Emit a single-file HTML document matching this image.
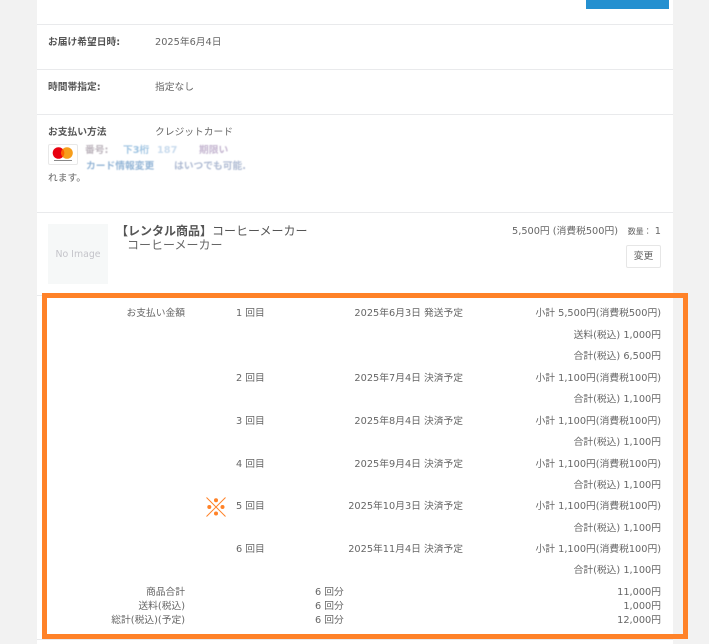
<!DOCTYPE html>
<html lang="ja">
<head>
<meta charset="utf-8">
<style>
html,body{margin:0;padding:0}
body{width:709px;height:644px;background:#f2f2f2;overflow:hidden;position:relative;font-family:"DejaVu Sans","Noto Sans CJK JP",sans-serif;font-size:9.75px;color:#666}
.abs,.t,.r,.ln{position:absolute}
.panel{left:37px;top:0;width:636px;height:644px;background:#fff}
.ln{left:37px;width:636px;height:1px;background:#e9eaec}
.t{white-space:nowrap;line-height:22px}
.r{white-space:nowrap;line-height:22px;text-align:right}
.a{right:48px}
.d{right:246px}
.l{right:524px}
.b{font-weight:bold;color:#555}
.bl{filter:blur(.6px);font-weight:bold;opacity:.75}
</style>
</head>
<body>
<div class="abs panel"></div>
<div class="abs" style="left:586px;top:0;width:83px;height:9px;background:#2490d0"></div>
<div class="ln" style="top:24px"></div>
<div class="ln" style="top:69px"></div>
<div class="ln" style="top:114px"></div>
<div class="ln" style="top:212px"></div>
<div class="ln" style="top:295px"></div>
<div class="ln" style="top:639px"></div>

<div class="t b" style="left:48px;top:32px">お届け希望日時:</div>
<div class="t" style="left:155px;top:32px">2025年6月4日</div>
<div class="t b" style="left:48px;top:77px">時間帯指定:</div>
<div class="t" style="left:155px;top:77px">指定なし</div>
<div class="t b" style="left:48px;top:122px">お支払い方法</div>
<div class="t" style="left:155px;top:122px">クレジットカード</div>

<div class="abs" style="left:48px;top:144px;width:28px;height:19px;border:1px solid #e8e8e8;border-radius:2px;background:#fff"></div>
<svg class="abs" style="left:48px;top:144px" width="30" height="21" viewBox="0 0 30 21">
<circle cx="10.5" cy="9" r="5.8" fill="#e8000f"/>
<circle cx="19" cy="9" r="5.8" fill="#f79e1b"/>
<path d="M14.75 5a5.8 5.8 0 0 1 0 8 5.8 5.8 0 0 1 0-8z" fill="#ff5f00"/>
<rect x="6" y="16" width="18" height="1" fill="#888"/>
</svg>

<div class="t bl" style="left:85px;top:140px;color:#a59aa5">番号:</div>
<div class="t bl" style="left:123px;top:140px;color:#7fb0d8">下3桁</div>
<div class="t bl" style="left:157px;top:140px;color:#b8d0e8">187</div>
<div class="t bl" style="left:199px;top:140px;color:#b09cc0">期限い</div>
<div class="t bl" style="left:86px;top:156px;color:#6f9cc8">カード情報変更</div>
<div class="t bl" style="left:174px;top:156px;color:#94a4c4">はいつでも可能.</div>
<div class="t" style="left:48px;top:168px">れます。</div>

<div class="abs" style="left:48px;top:224px;width:60px;height:60px;background:#f6f8f8"></div>
<div class="t" style="left:48px;top:244px;width:60px;text-align:center;font-size:9.4px;color:#c4c4ca">No Image</div>
<div class="t" style="left:116px;top:220px;font-size:12px;font-weight:bold;color:#555">【レンタル商品】<span style="font-weight:normal">コーヒーメーカー</span></div>
<div class="t" style="left:127px;top:234px;font-size:12px">コーヒーメーカー</div>
<div class="r" style="right:91px;top:221px">5,500円 (消費税500円)</div>
<div class="r" style="right:48px;top:221px"><span style="font-size:8px">数量：</span> 1</div>
<div class="abs" style="left:626px;top:245px;width:33px;height:21px;border:1px solid #e6e6e6;border-radius:2px;text-align:center;line-height:21px;font-size:9.75px">変更</div>

<div class="r l" style="top:303px">お支払い金額</div>

<div class="t" style="left:236px;top:303px">1 回目</div>
<div class="r d" style="top:303px">2025年6月3日 発送予定</div>
<div class="r a" style="top:303px">小計 5,500円(消費税500円)</div>
<div class="r a" style="top:325px">送料(税込) 1,000円</div>
<div class="r a" style="top:346px">合計(税込) 6,500円</div>

<div class="t" style="left:236px;top:368px">2 回目</div>
<div class="r d" style="top:368px">2025年7月4日 決済予定</div>
<div class="r a" style="top:368px">小計 1,100円(消費税100円)</div>
<div class="r a" style="top:389px">合計(税込) 1,100円</div>

<div class="t" style="left:236px;top:411px">3 回目</div>
<div class="r d" style="top:411px">2025年8月4日 決済予定</div>
<div class="r a" style="top:411px">小計 1,100円(消費税100円)</div>
<div class="r a" style="top:432px">合計(税込) 1,100円</div>

<div class="t" style="left:236px;top:454px">4 回目</div>
<div class="r d" style="top:454px">2025年9月4日 決済予定</div>
<div class="r a" style="top:454px">小計 1,100円(消費税100円)</div>
<div class="r a" style="top:475px">合計(税込) 1,100円</div>

<div class="t" style="left:236px;top:496px">5 回目</div>
<div class="r d" style="top:496px">2025年10月3日 決済予定</div>
<div class="r a" style="top:496px">小計 1,100円(消費税100円)</div>
<div class="r a" style="top:518px">合計(税込) 1,100円</div>

<div class="t" style="left:236px;top:539px">6 回目</div>
<div class="r d" style="top:539px">2025年11月4日 決済予定</div>
<div class="r a" style="top:539px">小計 1,100円(消費税100円)</div>
<div class="r a" style="top:560px">合計(税込) 1,100円</div>

<div class="r l" style="top:582px">商品合計</div>
<div class="t" style="left:315px;top:582px">6 回分</div>
<div class="r a" style="top:582px">11,000円</div>
<div class="r l" style="top:596px">送料(税込)</div>
<div class="t" style="left:315px;top:596px">6 回分</div>
<div class="r a" style="top:596px">1,000円</div>
<div class="r l" style="top:610px">総計(税込)(予定)</div>
<div class="t" style="left:315px;top:610px">6 回分</div>
<div class="r a" style="top:610px">12,000円</div>

<svg class="abs" style="left:206px;top:497px" width="20" height="20" viewBox="0 0 20 20">
<path d="M.5.5 19.5 19.5M19.5.5.5 19.5" stroke="#ff8228" stroke-width="1" fill="none"/>
<circle cx="10" cy="3.2" r="2" fill="#ff8228"/>
<circle cx="10" cy="16.5" r="2" fill="#ff8228"/>
<circle cx="3.3" cy="10" r="2" fill="#ff8228"/>
<circle cx="16.5" cy="10" r="2" fill="#ff8228"/>
</svg>

<div class="abs" style="left:42px;top:293px;width:636px;height:336px;border:5px solid #ff8228"></div>
</body>
</html>
